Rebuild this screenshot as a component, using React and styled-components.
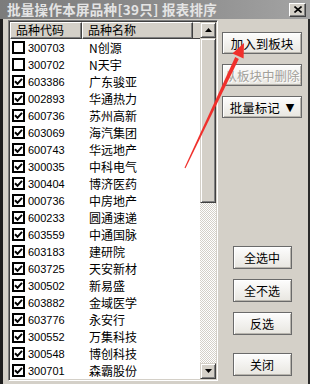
import React from "react";
import styled, { createGlobalStyle } from "styled-components";

const GlobalStyle = createGlobalStyle`
  html, body {
    margin: 0;
    padding: 0;
    background: #1c1c1c;
  }
`;

const cjk = `"Noto Sans CJK SC", "Liberation Sans", sans-serif`;

const rows = [
  ["300703", "N创源", false],
  ["300702", "N天宇", false],
  ["603386", "广东骏亚", true],
  ["002893", "华通热力", true],
  ["600736", "苏州高新", true],
  ["603069", "海汽集团", true],
  ["600743", "华远地产", true],
  ["300035", "中科电气", true],
  ["300404", "博济医药", true],
  ["000736", "中房地产", true],
  ["600233", "圆通速递", true],
  ["603559", "中通国脉", true],
  ["603183", "建研院", true],
  ["603725", "天安新材", true],
  ["300502", "新易盛", true],
  ["603882", "金域医学", true],
  ["603776", "永安行", true],
  ["300552", "万集科技", true],
  ["300548", "博创科技", true],
  ["300701", "森霸股份", true],
];

const App = () => {
  return (
    <Screen>
      <GlobalStyle />
      <TitleBar>
        <TitleText>批量操作本屏品种[39只] 报表排序</TitleText>
        <CloseButton>
          <svg width="8" height="7" viewBox="0 0 8 7">
            <path d="M0.5 0.5 L7.5 6.5 M7.5 0.5 L0.5 6.5" stroke="#000" strokeWidth="1.6" />
          </svg>
        </CloseButton>
      </TitleBar>
      <Body>
        <ListBox>
          <ListMain>
            <HeaderRow>
              <HeaderCell width={72}>品种代码</HeaderCell>
              <HeaderCell width={111}>品种名称</HeaderCell>
              <HeaderFill />
            </HeaderRow>
            {rows.map(([code, name, checked]) => (
              <Row key={code}>
                <CodeCell>
                  <CheckBox>
                    {checked && (
                      <svg width="9" height="9" viewBox="0 0 9 9">
                        <path d="M1 4.2 L3.5 6.8 L8 1.8" stroke="#000" strokeWidth="2" fill="none" />
                      </svg>
                    )}
                  </CheckBox>
                  <Code>{code}</Code>
                </CodeCell>
                <NameCell>{name}</NameCell>
              </Row>
            ))}
          </ListMain>
          <ScrollBar>
            <ScrollButton>
              <svg width="7" height="4" viewBox="0 0 7 4">
                <path d="M3.5 0 L7 4 L0 4 Z" fill="#000" />
              </svg>
            </ScrollButton>
            <Thumb />
            <Track />
            <ScrollButton>
              <svg width="7" height="4" viewBox="0 0 7 4">
                <path d="M0 0 L7 0 L3.5 4 Z" fill="#000" />
              </svg>
            </ScrollButton>
          </ScrollBar>
        </ListBox>
        <SideColumn>
          <TopGroup>
            <WideButton>加入到板块</WideButton>
            <WideButton disabled>从板块中删除</WideButton>
            <WideButton>
              批量标记
              <DropArrow>▼</DropArrow>
            </WideButton>
          </TopGroup>
          <BottomGroup>
            <SmallButton>全选中</SmallButton>
            <SmallButton>全不选</SmallButton>
            <SmallButton>反选</SmallButton>
            <SmallButton $gapBefore={8}>关闭</SmallButton>
          </BottomGroup>
        </SideColumn>
      </Body>
      <Arrow width="310" height="384" viewBox="0 0 310 384">
        <polygon
          points="184.5,167.8 185.5,168.2 238.8,58.9 235.2,57.1"
          fill="#f0302c"
        />
        <polygon points="244,43 232.4,53.4 243.6,58.6" fill="#f0302c" />
      </Arrow>
    </Screen>
  );
};

const Screen = styled.div`
  position: relative;
  width: 310px;
  height: 384px;
  background: #d4d0c8;
  overflow: hidden;
`;

const TitleBar = styled.div`
  height: 19px;
  display: flex;
  align-items: center;
  justify-content: space-between;
  padding: 0 4px 0 7px;
  background: linear-gradient(90deg, #7c7c7c 0%, #8e8e8e 60%, #a4a4a4 100%);
`;

const TitleText = styled.div`
  font-family: ${cjk};
  font-size: 13.5px;
  font-weight: 700;
  letter-spacing: 0.3px;
  color: #e4e4e4;
  line-height: 19px;
  white-space: nowrap;
`;

const CloseButton = styled.div`
  width: 15px;
  height: 12px;
  display: flex;
  align-items: center;
  justify-content: center;
  background: #d4d0c8;
  border: 1px solid;
  border-color: #fff #404040 #404040 #fff;
  box-shadow: inset -1px -1px #808080;
`;

const Body = styled.div`
  display: flex;
  height: 365px;
  box-sizing: border-box;
  border-left: 3px solid #1e1e1e;
  border-right: 2px solid #2a2a2a;
  padding: 1px 0 0 5px;
`;

const ListBox = styled.div`
  display: flex;
  width: 210px;
  height: 361px;
  box-sizing: border-box;
  border: 1px solid;
  border-color: #808080 #fff #fff #808080;
  box-shadow: inset 1px 1px #404040, inset -1px -1px #d4d0c8;
  padding: 1px;
  background: #fff;
`;

const ListMain = styled.div`
  flex: 1;
  display: flex;
  flex-direction: column;
  overflow: hidden;
`;

const HeaderRow = styled.div`
  display: flex;
  height: 17px;
  flex: none;
`;

const HeaderCell = styled.div`
  width: ${(p) => p.width}px;
  box-sizing: border-box;
  background: #d4d0c8;
  border: 1px solid;
  border-color: #fff #404040 #404040 #fff;
  box-shadow: inset -1px -1px #808080;
  font-family: ${cjk};
  font-size: 12px;
  line-height: 14px;
  padding-left: 5px;
  color: #000;
  white-space: nowrap;
`;

const HeaderFill = styled.div`
  flex: 1;
  background: #d4d0c8;
  border-top: 1px solid #fff;
  border-bottom: 1px solid #404040;
`;

const Row = styled.div`
  display: flex;
  align-items: center;
  height: 17px;
  flex: none;
`;

const CodeCell = styled.div`
  width: 72px;
  display: flex;
  align-items: center;
  padding-left: 2px;
  box-sizing: border-box;
`;

const CheckBox = styled.div`
  width: 13px;
  height: 13px;
  box-sizing: border-box;
  border: 2px solid #000;
  background: #fff;
  display: flex;
  align-items: center;
  justify-content: center;
`;

const Code = styled.span`
  margin-left: 3px;
  font-family: "Liberation Sans", Arial, sans-serif;
  font-size: 11px;
  color: #000;
`;

const NameCell = styled.div`
  padding-left: 7px;
  font-family: ${cjk};
  font-size: 12px;
  color: #000;
  white-space: nowrap;
`;

const ScrollBar = styled.div`
  width: 16px;
  display: flex;
  flex-direction: column;
`;

const raised = `
  box-sizing: border-box;
  background: #d4d0c8;
  border: 1px solid;
  border-color: #d4d0c8 #404040 #404040 #d4d0c8;
  box-shadow: inset 1px 1px #fff, inset -1px -1px #808080;
`;

const ScrollButton = styled.div`
  ${raised}
  height: 16px;
  flex: none;
  display: flex;
  align-items: center;
  justify-content: center;
`;

const Thumb = styled.div`
  ${raised}
  height: 165px;
  flex: none;
`;

const Track = styled.div`
  flex: 1;
  background: repeating-conic-gradient(#d4d0c8 0 25%, #fff 0 50%) 0 0 / 2px 2px;
`;

const SideColumn = styled.div`
  width: 80px;
  margin-left: 4px;
  display: flex;
  flex-direction: column;
`;

const TopGroup = styled.div`
  display: flex;
  flex-direction: column;
  gap: 10px;
  padding-top: 12px;
`;

const BottomGroup = styled.div`
  display: flex;
  flex-direction: column;
  align-items: center;
  gap: 10px;
  margin-top: 128px;
`;

const buttonFace = `
  box-sizing: border-box;
  border: 1px solid #6a6a6a;
  background: linear-gradient(#fdfdfd, #e8e6e0);
  box-shadow: inset 1px 1px #fff, inset -1px -1px #b8b5ae;
  display: flex;
  align-items: center;
  justify-content: center;
  font-family: ${cjk};
  color: #000;
  white-space: nowrap;
  overflow: hidden;
  padding: 0;
`;

const WideButton = styled.button`
  ${buttonFace}
  width: 80px;
  height: 22px;
  font-size: 12.5px;
  &:disabled {
    color: #a2a09a;
    text-shadow: 1px 1px #fff;
  }
`;

const DropArrow = styled.span`
  margin-left: 6px;
  font-size: 11px;
  font-family: "DejaVu Sans", sans-serif;
`;

const SmallButton = styled.button`
  ${buttonFace}
  width: 59px;
  height: 23px;
  font-size: 12px;
  margin-top: ${(p) => p.$gapBefore || 0}px;
`;

const Arrow = styled.svg`
  position: absolute;
  left: 0;
  top: 0;
  pointer-events: none;
`;

export default App;
